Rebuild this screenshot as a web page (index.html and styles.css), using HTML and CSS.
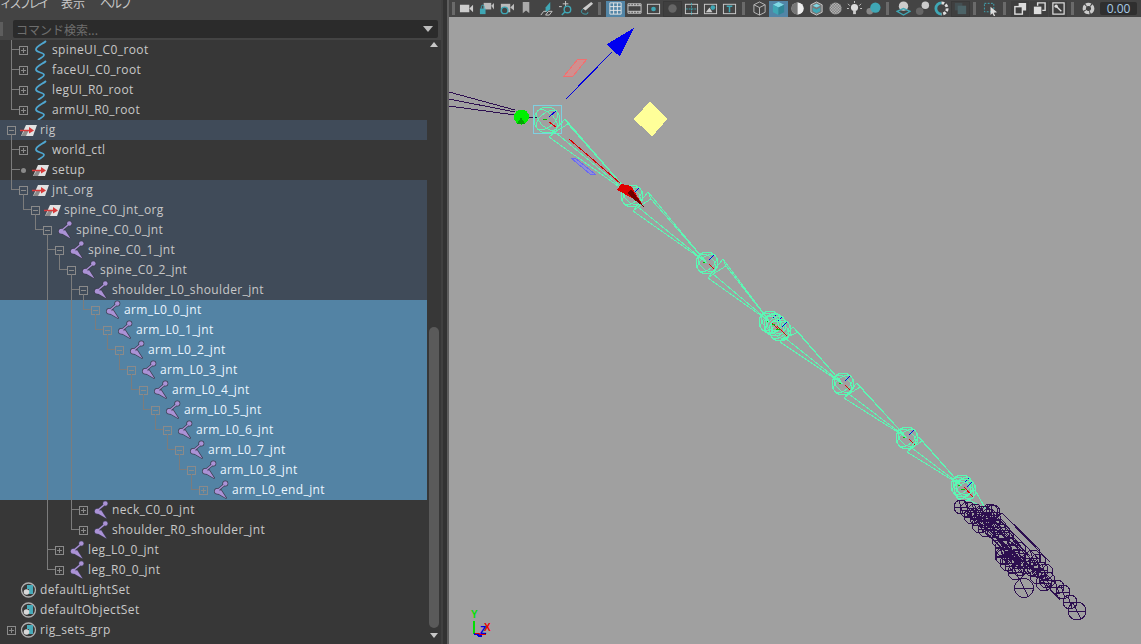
FILE: index.html
```html
<!DOCTYPE html>
<html lang="ja">
<head>
<meta charset="utf-8">
<title>Maya Outliner</title>
<link rel="stylesheet" href="styles.css">
</head>
<body>
<svg class="sprite" aria-hidden="true">
  <defs>
    <symbol id="i-curve" viewBox="0 0 24 20">
      <path d="M18 1C15 4 8 6 8 9.500C8 13 16 12 16 15C16 17 12 18 10 20" fill="none" stroke="#4fa6cf" stroke-width="1.800"/>
    </symbol>
    <symbol id="i-xform" viewBox="0 0 24 20">
      <path d="M10 5H21L17 16H5Z" fill="#e2e2e2"/>
      <path d="M5 16L9 10H13L10 16Z" fill="#8a8a8a"/>
      <path d="M4 10.500H14" stroke="#d83a3a" stroke-width="1.500"/>
      <path d="M13 7L18 10.500L13 13.500Z" fill="#d83a3a"/>
    </symbol>
    <symbol id="i-joint" viewBox="0 0 24 20">
      <g fill="#3d3d50" stroke="#3d3d50" stroke-width="1.400">
        <path d="M9 13L13 10L18.500 18.500Z"/>
        <path d="M10 10L16 5" stroke-width="2.600"/>
        <circle cx="17.300" cy="3.500" r="2.300"/>
        <circle cx="9.300" cy="11.300" r="2.500"/>
      </g>
      <g fill="#ab92d6">
        <path d="M9 13L13 10L18.500 18.500Z"/>
        <path d="M10 10L16 5" stroke="#ab92d6" stroke-width="1.400"/>
        <circle cx="17.300" cy="3.500" r="2.300"/>
        <circle cx="9.300" cy="11.300" r="2.500"/>
      </g>
    </symbol>
    <symbol id="i-set" viewBox="0 0 24 20">
      <circle cx="12.500" cy="10" r="7" fill="none" stroke="#b0b0b0" stroke-width="1.300"/>
      <path d="M11 5H17V14H13V9H11Z" fill="#48aab8"/>
      <circle cx="10.500" cy="12" r="2.800" fill="#d8d8d8"/>
    </symbol>
    <g id="jg">
      <circle r="11"/><ellipse rx="11" ry="6.500" transform="rotate(45)"/><ellipse rx="11" ry="6.500" transform="rotate(-40)"/>
      <path class="ax-b" d="M2-3L7-8"/><path class="ax-r" d="M2 1L8 7"/><path class="ax-g" d="M-4-1L0 0"/>
    </g>
    <g id="pj">
      <circle r="8"/><path d="M-8 0H8M-3-7L3 7"/>
    </g>
    <g id="pk">
      <circle r="7"/><path d="M-7 0H7M-2-6L2 6"/>
    </g>
  </defs>
</svg>

<div class="app">
  <aside class="outliner">
    <div class="menubar">
      <span class="menu kana">ィスプレイ</span><span class="menu kanji">表示</span><span class="menu kana2">ヘルプ</span>
    </div>
    <div class="searchrow">
      <span class="handle"></span>
      <div class="search"><span class="ph">コマンド検索...</span><span class="caret"></span></div>
    </div>
    <div class="treewrap">
      <div class="tree">
        <div class="row" style="--d:1"><span class="exp plus"></span><svg class="ti"><use href="#i-curve"/></svg><span class="lb">spineUI_C0_root</span></div>
        <div class="row" style="--d:1"><span class="exp plus"></span><svg class="ti"><use href="#i-curve"/></svg><span class="lb">faceUI_C0_root</span></div>
        <div class="row" style="--d:1"><span class="exp plus"></span><svg class="ti"><use href="#i-curve"/></svg><span class="lb">legUI_R0_root</span></div>
        <div class="row" style="--d:1"><span class="exp plus"></span><svg class="ti"><use href="#i-curve"/></svg><span class="lb">armUI_R0_root</span></div>
        <div class="row par" style="--d:0"><span class="exp minus"></span><svg class="ti"><use href="#i-xform"/></svg><span class="lb">rig</span></div>
        <div class="row" style="--d:1"><span class="exp plus"></span><svg class="ti"><use href="#i-curve"/></svg><span class="lb">world_ctl</span></div>
        <div class="row" style="--d:1"><span class="exp dot"></span><svg class="ti"><use href="#i-xform"/></svg><span class="lb">setup</span></div>
        <div class="row par" style="--d:1"><span class="exp minus"></span><svg class="ti"><use href="#i-xform"/></svg><span class="lb">jnt_org</span></div>
        <div class="row par" style="--d:2"><span class="exp minus"></span><svg class="ti"><use href="#i-xform"/></svg><span class="lb">spine_C0_jnt_org</span></div>
        <div class="row par" style="--d:3"><span class="exp minus"></span><svg class="ti"><use href="#i-joint"/></svg><span class="lb">spine_C0_0_jnt</span></div>
        <div class="row par" style="--d:4"><span class="exp minus"></span><svg class="ti"><use href="#i-joint"/></svg><span class="lb">spine_C0_1_jnt</span></div>
        <div class="row par" style="--d:5"><span class="exp minus"></span><svg class="ti"><use href="#i-joint"/></svg><span class="lb">spine_C0_2_jnt</span></div>
        <div class="row par" style="--d:6"><span class="exp minus"></span><svg class="ti"><use href="#i-joint"/></svg><span class="lb">shoulder_L0_shoulder_jnt</span></div>
        <div class="row sel" style="--d:7"><span class="exp minus"></span><svg class="ti"><use href="#i-joint"/></svg><span class="lb">arm_L0_0_jnt</span></div>
        <div class="row sel" style="--d:8"><span class="exp minus"></span><svg class="ti"><use href="#i-joint"/></svg><span class="lb">arm_L0_1_jnt</span></div>
        <div class="row sel" style="--d:9"><span class="exp minus"></span><svg class="ti"><use href="#i-joint"/></svg><span class="lb">arm_L0_2_jnt</span></div>
        <div class="row sel" style="--d:10"><span class="exp minus"></span><svg class="ti"><use href="#i-joint"/></svg><span class="lb">arm_L0_3_jnt</span></div>
        <div class="row sel" style="--d:11"><span class="exp minus"></span><svg class="ti"><use href="#i-joint"/></svg><span class="lb">arm_L0_4_jnt</span></div>
        <div class="row sel" style="--d:12"><span class="exp minus"></span><svg class="ti"><use href="#i-joint"/></svg><span class="lb">arm_L0_5_jnt</span></div>
        <div class="row sel" style="--d:13"><span class="exp minus"></span><svg class="ti"><use href="#i-joint"/></svg><span class="lb">arm_L0_6_jnt</span></div>
        <div class="row sel" style="--d:14"><span class="exp minus"></span><svg class="ti"><use href="#i-joint"/></svg><span class="lb">arm_L0_7_jnt</span></div>
        <div class="row sel" style="--d:15"><span class="exp minus"></span><svg class="ti"><use href="#i-joint"/></svg><span class="lb">arm_L0_8_jnt</span></div>
        <div class="row sel" style="--d:16"><span class="exp plus"></span><svg class="ti"><use href="#i-joint"/></svg><span class="lb">arm_L0_end_jnt</span></div>
        <div class="row" style="--d:6"><span class="exp plus"></span><svg class="ti"><use href="#i-joint"/></svg><span class="lb">neck_C0_0_jnt</span></div>
        <div class="row" style="--d:6"><span class="exp plus"></span><svg class="ti"><use href="#i-joint"/></svg><span class="lb">shoulder_R0_shoulder_jnt</span></div>
        <div class="row" style="--d:4"><span class="exp plus"></span><svg class="ti"><use href="#i-joint"/></svg><span class="lb">leg_L0_0_jnt</span></div>
        <div class="row" style="--d:4"><span class="exp plus"></span><svg class="ti"><use href="#i-joint"/></svg><span class="lb">leg_R0_0_jnt</span></div>
        <div class="row" style="--d:0"><span class="exp"></span><svg class="ti"><use href="#i-set"/></svg><span class="lb">defaultLightSet</span></div>
        <div class="row" style="--d:0"><span class="exp"></span><svg class="ti"><use href="#i-set"/></svg><span class="lb">defaultObjectSet</span></div>
        <div class="row" style="--d:0"><span class="exp plus"></span><svg class="ti"><use href="#i-set"/></svg><span class="lb">rig_sets_grp</span></div>
        <svg class="guides" viewBox="0 40 427 604" aria-hidden="true">
          <path d="M11.500 40V109.500H19M11.500 49.500H19M11.500 69.500H19M11.500 89.500H19"/>
          <path d="M11.500 134V189.500H19M11.500 149.500H19M11.500 169.500H20"/>
          <path d="M23.500 194V209.500H31M35.500 214V229.500H43"/>
          <path d="M47.500 234V569.500H55M47.500 249.500H55M47.500 549.500H55"/>
          <path d="M59.500 254V269.500H67"/>
          <path d="M71.500 274V529.500H79M71.500 289.500H79M71.500 509.500H79"/>
          <path d="M83.500 294V309.500H91M95.500 314V329.500H103M107.500 334V349.500H115M119.500 354V369.500H127M131.500 374V389.500H139M143.500 394V409.500H151M155.500 414V429.500H163M167.500 434V449.500H175M179.500 454V469.500H187M191.500 474V489.500H199"/>
        </svg>
      </div>
      <div class="scrollbar">
        <span class="arrow up"></span>
        <div class="track"><div class="thumb"></div></div>
        <span class="arrow down"></span>
      </div>
    </div>
  </aside>
  <div class="strip"></div>
  <main class="view">
    <div class="toolbar">
      <span class="sep first"></span>
      <div class="grp g1">
        <span class="btn"><svg viewBox="0 0 16 16"><rect x="1" y="4" width="10" height="8" fill="#ccc"/><path d="M11 8L15 4V12Z" fill="#ccc"/></svg></span>
        <span class="btn"><svg viewBox="0 0 16 16"><rect x="5" y="2" width="8" height="7" fill="#bbb"/><path d="M13 5L16 2V9Z" fill="#bbb"/><rect x="1" y="8" width="6" height="6" fill="#3fa7b5"/><path d="M2.500 8V6A1.500 1.500 0 0 1 5.500 6V8" fill="none" stroke="#3fa7b5"/></svg></span>
        <span class="btn"><svg viewBox="0 0 16 16"><rect x="2" y="3" width="10" height="9" fill="#bbb"/><path d="M12 7L16 3V10Z" fill="#bbb"/><circle cx="6" cy="10" r="3.500" fill="#444" stroke="#3fa7b5" stroke-width="1.500"/></svg></span>
        <span class="btn"><svg viewBox="0 0 16 16"><path d="M4 1H11V13L7.500 10L4 13Z" fill="#aaa"/></svg></span>
        <span class="btn"><svg viewBox="0 0 16 16"><path d="M7 7L12 1V9L7 12Z" fill="#3fa7b5"/><path d="M2 15L5 11H8M7 15L10 11H14L11 15Z" fill="none" stroke="#ccc"/></svg></span>
        <span class="btn"><svg viewBox="0 0 16 16"><path d="M7 0V6M4 3H10M0 6H3" stroke="#ccc"/><circle cx="9" cy="9" r="3.500" fill="none" stroke="#3fa7b5" stroke-width="1.500"/><path d="M6.500 11.500L3 15" stroke="#3fa7b5" stroke-width="1.500"/></svg></span>
        <span class="btn"><svg viewBox="0 0 16 16"><path d="M13 1L15 3L7 10L4 8Z" fill="#ccc"/><path d="M4 9C1 11 3 14 7 14C10 14 10 12 9 12" fill="none" stroke="#3fa7b5"/></svg></span>
      </div>
      <span class="sep"></span>
      <div class="grp">
        <span class="btn on"><svg viewBox="0 0 16 16"><path d="M2 2H14V14H2ZM2 6H14M2 10H14M6 2V14M10 2V14" fill="none" stroke="#e6e6e6"/></svg></span>
        <span class="btn"><svg viewBox="0 0 16 16"><path d="M1 3H15V13H1ZM1 5H15M1 11H15M4 3V5M7 3V5M10 3V5M13 3V5M4 11V13M7 11V13M10 11V13M13 11V13" fill="none" stroke="#ccc"/></svg></span>
        <span class="btn"><svg viewBox="0 0 16 16"><rect x="1.500" y="3.500" width="13" height="10" fill="none" stroke="#ccc"/><circle cx="8" cy="8.500" r="2.500" fill="#3fa7b5"/></svg></span>
        <span class="btn dark"><svg viewBox="0 0 16 16"><circle cx="8" cy="8" r="4.500" fill="#666"/></svg></span>
        <span class="btn"><svg viewBox="0 0 16 16"><rect x="1.500" y="3.500" width="13" height="10" fill="none" stroke="#ccc"/><path d="M8 2V15M2 8.500H14" stroke="#3fa7b5" stroke-dasharray="2 1"/></svg></span>
        <span class="btn"><svg viewBox="0 0 16 16"><rect x="1.500" y="3.500" width="13" height="10" fill="none" stroke="#ccc"/><path d="M3 12L7 7L10 12Z" fill="#ccc"/><circle cx="10.500" cy="7" r="2.500" fill="#3fa7b5"/></svg></span>
        <span class="btn"><svg viewBox="0 0 16 16"><rect x="1.500" y="3.500" width="13" height="10" fill="none" stroke="#ccc"/><path d="M5 5.500H11M8 5.500V12" stroke="#3fa7b5" stroke-width="1.600"/></svg></span>
      </div>
      <span class="sep"></span>
      <div class="grp">
        <span class="btn"><svg viewBox="0 0 16 16"><path d="M8 1L14 4V12L8 15L2 12V4ZM2 4L8 7L14 4M8 7V15" fill="none" stroke="#bbb"/></svg></span>
        <span class="btn on"><svg viewBox="0 0 16 16"><path d="M8 1L14 4L8 7L2 4Z" fill="#7fd8e4"/><path d="M2 4L8 7V15L2 12Z" fill="#3fa7b5"/><path d="M14 4L8 7V15L14 12Z" fill="#2f8696"/></svg></span>
        <span class="btn"><svg viewBox="0 0 16 16"><circle cx="8" cy="8" r="6.500" fill="#bbb"/><path d="M8 1.500A6.500 6.500 0 0 1 8 14.500Z" fill="#eee"/><path d="M8 1.500A6.500 6.500 0 0 0 8 14.500Z" fill="#777"/></svg></span>
        <span class="btn"><svg viewBox="0 0 16 16"><path d="M8 1L14 4V12L8 15L2 12V4Z" fill="#777" stroke="#ccc"/><path d="M8 3L12 5L8 7L4 5Z" fill="#7fd8e4"/><path d="M4 7L8 9V13L4 11ZM12 7L8 9V13L12 11Z" fill="#3fa7b5"/></svg></span>
        <span class="btn"><svg viewBox="0 0 16 16"><defs><pattern id="chk" width="3" height="3" patternUnits="userSpaceOnUse"><rect width="3" height="3" fill="#ddd"/><rect width="1.500" height="1.500" fill="#555"/><rect x="1.500" y="1.500" width="1.500" height="1.500" fill="#555"/></pattern></defs><circle cx="8" cy="8" r="6.500" fill="url(#chk)"/></svg></span>
        <span class="btn"><svg viewBox="0 0 16 16"><path d="M8 0V2M1 3L3 5M15 3L13 5M0 8H2M14 8H16" stroke="#ccc"/><circle cx="8" cy="7" r="3.800" fill="#ddd"/><rect x="6.500" y="10" width="3" height="4" fill="#ccc"/></svg></span>
        <span class="btn"><svg viewBox="0 0 16 16"><circle cx="4" cy="11" r="3.500" fill="#888"/><circle cx="10" cy="7" r="5.500" fill="#3fa7b5"/></svg></span>
      </div>
      <span class="sep"></span>
      <div class="grp">
        <span class="btn"><svg viewBox="0 0 16 16"><circle cx="8" cy="5.500" r="5" fill="#ccc"/><path d="M1 11L8 8L15 11L8 15Z" fill="none" stroke="#3fa7b5" stroke-width="1.500"/></svg></span>
        <span class="btn"><svg viewBox="0 0 16 16"><circle cx="5" cy="11" r="4" fill="#666"/><circle cx="11" cy="4.500" r="4" fill="#ccc"/></svg></span>
        <span class="btn"><svg viewBox="0 0 16 16"><path d="M8 2A6 6 0 0 0 8 14" fill="none" stroke="#3fa7b5" stroke-width="3"/><path d="M8 2A6 6 0 0 1 8 14" fill="none" stroke="#ddd" stroke-width="3" stroke-dasharray="3 1.500"/></svg></span>
        <span class="btn dark"><svg viewBox="0 0 16 16"><rect x="2" y="2" width="8" height="8" fill="#444f52"/><rect x="5" y="5" width="9" height="9" fill="#4c6367"/></svg></span>
      </div>
      <span class="sep"></span>
      <div class="grp">
        <span class="btn"><svg viewBox="0 0 16 16"><path d="M1.500 2.500H11.500V11.500H1.500Z" fill="none" stroke="#3fa7b5" stroke-dasharray="2 1.500"/><path d="M8 6L15 12L11.500 12.500L13 16L11.500 16L10 13L8 15Z" fill="#ddd"/></svg></span>
      </div>
      <span class="sep"></span>
      <div class="grp">
        <span class="btn shade"><svg viewBox="0 0 16 16"><rect x="2" y="6" width="8" height="8" fill="none" stroke="#ddd" stroke-width="1.500"/><path d="M6 6V2H14V10H10V6Z" fill="#ddd"/></svg></span>
        <span class="btn shade"><svg viewBox="0 0 16 16"><rect x="2" y="6" width="8" height="8" fill="#ddd"/><path d="M6 5V2H14V10H11" fill="none" stroke="#ddd" stroke-width="1.500"/></svg></span>
        <span class="btn shade"><svg viewBox="0 0 16 16"><rect x="2" y="2" width="12" height="12" fill="none" stroke="#ddd" stroke-width="1.300"/><path d="M5 5L11 11" stroke="#ddd" stroke-width="1.500"/><circle cx="5.500" cy="5.500" r="1.800" fill="#ddd"/></svg></span>
      </div>
      <span class="sep"></span>
      <div class="grp">
        <span class="btn"><svg viewBox="0 0 16 16"><circle cx="8" cy="8" r="4.500" fill="none" stroke="#ccc" stroke-width="3.500" stroke-dasharray="5 1"/></svg></span>
      </div>
      <span class="field">0.00</span>
    </div>
    <div class="canvas">
      <svg class="scene" viewBox="449 17 692 627" aria-label="3D viewport">
        <g class="pur">
          <path d="M449 92L515 110M449 99L515 112M449 106L515 115M528 117L538 118"/>
        </g>
        <circle cx="521.500" cy="117" r="7.500" fill="#00f000"/>
        <path d="M521 117L517 124H525Z" fill="#00a800"/>
        <path d="M564 76L578 59H587L573 76Z" fill="#cf9090" stroke="#f07070"/>
        <path d="M571 158H575L595 174H590Z" fill="#8f8fd8" stroke="#6a6af0"/>
        <path d="M650 103L666 119L652 135L635 119Z" fill="#ffff99" stroke="#ffff99" stroke-width="2" stroke-linejoin="round"/>
        <path d="M566 99L612 52" stroke="#0000e0" fill="none"/>
        <path d="M634 28L620 56L613 51L607 44Z" fill="#0000f0"/>
        <rect x="533.500" y="105.500" width="28" height="28" fill="none" stroke="#7fd0e0"/>
        <g class="grn">
          <circle cx="547" cy="120" r="13"/><ellipse cx="547" cy="120" rx="13" ry="7" transform="rotate(45 547 120)"/><ellipse cx="547" cy="120" rx="13" ry="7" transform="rotate(-40 547 120)"/>
          <path class="ax-b" d="M549 117L556 111"/><path class="ax-r" d="M549 122L556 127"/><path class="ax-g" d="M543 119L547 120"/>
          <use href="#jg" x="632" y="196"/>
          <use href="#jg" x="707" y="263"/>
          <use href="#jg" x="770" y="322"/>
          <use href="#jg" x="775" y="325"/>
          <use href="#jg" x="780" y="330"/>
          <use href="#jg" x="843" y="384"/>
          <use href="#jg" x="907" y="438"/>
          <use href="#jg" x="962" y="486"/>
          <use href="#jg" x="965" y="490"/>
          <path d="M565 119L549 137L555 132L568 124ZM565 119L632 196M549 137L632 196M555 132L632 196M568 124L632 196"/>
          <path d="M648 192L633 211L638 207L651 199ZM648 192L707 263M633 211L707 263M638 207L707 263M651 199L707 263"/>
          <path d="M723 259L708 278L713 274L726 266ZM723 259L770 322M708 278L770 322M713 274L770 322M726 266L770 322"/>
          <path d="M793 327L780 342L785 338L798 332ZM793 327L843 384M780 342L843 384M785 338L843 384M798 332L843 384"/>
          <path d="M857 383L844 398L849 394L860 387ZM857 383L907 438M844 398L907 438M849 394L907 438M860 387L907 438"/>
          <path d="M919 437L907 452L912 448L922 441ZM919 437L962 486M907 452L962 486M912 448L962 486M922 441L962 486"/>
          <path d="M975 490L963 497L985 508ZM975 490L985 508"/>
        </g>
        <path class="redline" d="M569 139L620 183"/>
        <path d="M617 190L621 184L631 186L644 207L632 198Z" fill="#e00000"/>
        <path d="M632 198L644 207L631 189L627 193Z" fill="#700000"/>
        <g class="pur">
          <circle cx="1077" cy="611" r="9"/><path d="M1068 611H1086M1073 603L1081 619"/>
          <circle cx="1024" cy="588" r="9.500"/><path d="M1015 588H1033M1020 580L1028 596"/>
          <use href="#pk" x="961" y="507"/><use href="#pj" x="968" y="510"/><use href="#pj" x="975" y="512"/>
          <use href="#pj" x="982" y="514"/><use href="#pj" x="990" y="512"/><use href="#pk" x="993" y="512"/>
          <use href="#pj" x="978" y="518"/><use href="#pj" x="986" y="520"/><use href="#pj" x="992" y="523"/>
          <use href="#pj" x="972" y="516"/><use href="#pj" x="984" y="514"/><use href="#pj" x="989" y="517"/><use href="#pj" x="993" y="520"/>
          <use href="#pj" x="980" y="525"/><use href="#pj" x="986" y="529"/><use href="#pj" x="993" y="530"/>
          <use href="#pj" x="998" y="527"/><use href="#pj" x="1002" y="532"/><use href="#pj" x="1000" y="540"/>
          <use href="#pj" x="1006" y="538"/><use href="#pj" x="1010" y="545"/><use href="#pj" x="1003" y="548"/>
          <use href="#pj" x="1004" y="557"/><use href="#pj" x="1012" y="552"/><use href="#pj" x="1018" y="550"/>
          <use href="#pj" x="1010" y="559"/><use href="#pj" x="1017" y="557"/><use href="#pj" x="1022" y="561"/>
          <use href="#pj" x="1013" y="566"/><use href="#pj" x="1020" y="568"/><use href="#pj" x="1026" y="566"/>
          <use href="#pj" x="1003" y="556"/><use href="#pj" x="1008" y="563"/><use href="#pj" x="1016" y="572"/>
          <use href="#pj" x="1033" y="558"/><use href="#pj" x="1038" y="562"/><use href="#pj" x="1032" y="568"/>
          <use href="#pj" x="1040" y="570"/><use href="#pj" x="1045" y="572"/><use href="#pj" x="1038" y="576"/>
          <use href="#pj" x="1044" y="583"/><use href="#pj" x="1047" y="580"/>
          <use href="#pk" x="1057" y="587"/><use href="#pk" x="1063" y="592"/><use href="#pk" x="1070" y="602"/>
          <path d="M1002 513L1040 550L1038 575L985 526ZM1002 513L1050 562M985 526L1030 570M975 515L1010 540M965 512L1022 560M1020 555L1060 600M970 508L1018 548M980 508L1030 556M992 512L1040 560M975 522L1020 566M988 535L1026 572M1000 520L1036 566"/>
        </g>
        <g class="tri">
          <path class="y" d="M474 621V634"/>
          <path class="x" d="M474 634H486"/>
          <path class="z" d="M474 634L482 636M482 636H478"/>
          <text class="ty" x="471" y="618">Y</text>
          <text class="tx" x="484" y="631">X</text>
          <text class="tz" x="480" y="634">Z</text>
        </g>
      </svg>
    </div>
  </main>
</div>
</body>
</html>
```

FILE: styles.css
```css
html, body {
  margin: 0;
  padding: 0;
  height: 100%;
  overflow: hidden;
  background: #373737;
}

.sprite {
  position: absolute;
  width: 0;
  height: 0;
}

.app {
  display: flex;
  width: 1141px;
  height: 644px;
  font-family: "Open Sans", "Noto Sans CJK JP", sans-serif;
}

.outliner {
  display: flex;
  flex-direction: column;
  width: 441px;
  height: 644px;
  flex: none;
  background: #373737;
}

.menubar {
  display: flex;
  height: 18px;
  overflow: hidden;
  background: #444444;
  font-family: "Noto Sans CJK JP", sans-serif;
  font-size: 12px;
  line-height: 16px;
  color: #c8c8c8;
}

.menu {
  margin-top: -5px;
}

.kana {
  width: 61px;
  letter-spacing: -2.500px;
}

.kanji {
  width: 39px;
}

.kana2 {
  letter-spacing: -2px;
}

.searchrow {
  display: flex;
  align-items: center;
  height: 22px;
  background: #444444;
}

.handle {
  width: 6px;
  height: 14px;
  margin: 0 7px 0 0;
  border-left: 3px solid #5d5d5d;
  box-sizing: border-box;
}

.search {
  display: flex;
  align-items: center;
  justify-content: space-between;
  width: 425px;
  height: 18px;
  background: #2b2b2b;
  border-radius: 2px;
  padding: 0 3px;
  box-sizing: border-box;
}

.ph {
  font-family: "Noto Sans CJK JP", sans-serif;
  font-size: 12px;
  color: #6e6e6e;
}

.caret {
  width: 0;
  height: 0;
  margin-right: 2px;
  border-left: 5px solid transparent;
  border-right: 5px solid transparent;
  border-top: 6px solid #bdbdbd;
}

.treewrap {
  display: flex;
  flex: 1;
  min-height: 0;
}

.tree {
  position: relative;
  width: 427px;
  flex: none;
  overflow: hidden;
}

.row {
  display: flex;
  align-items: center;
  height: 20px;
  padding-left: calc(var(--d) * 12px + 7px);
  font-size: 12px;
  letter-spacing: 0.380px;
  color: #c8c8c8;
  white-space: nowrap;
}

.lb {
  margin-top: -2px;
}

.par {
  background: #404b59;
}

.sel {
  background: #5383a4;
  color: #ecf6ff;
}

.exp {
  position: relative;
  width: 9px;
  height: 9px;
  flex: none;
  box-sizing: border-box;
}

.plus, .minus {
  border: 1px solid #8a8a8a;
}

.plus::before, .minus::before {
  content: "";
  position: absolute;
  left: 1px;
  top: 3px;
  width: 5px;
  height: 1px;
  background: #8a8a8a;
}

.plus::after {
  content: "";
  position: absolute;
  left: 3px;
  top: 1px;
  width: 1px;
  height: 5px;
  background: #8a8a8a;
}

.dot::before {
  content: "";
  position: absolute;
  left: 2px;
  top: 2px;
  width: 5px;
  height: 5px;
  border-radius: 50%;
  background: #8a8a8a;
}

.ti {
  width: 24px;
  height: 20px;
  flex: none;
}

.guides {
  position: absolute;
  left: 0;
  top: 0;
  width: 427px;
  height: 604px;
  fill: none;
  stroke: #7c7c7c;
  stroke-width: 1;
  shape-rendering: crispEdges;
  pointer-events: none;
}

.scrollbar {
  display: flex;
  flex-direction: column;
  align-items: center;
  width: 14px;
  flex: none;
  background: #373737;
}

.track {
  flex: 1;
  display: flex;
  flex-direction: column;
  justify-content: flex-end;
  width: 10px;
  min-height: 0;
}

.thumb {
  height: 301px;
  background: #5a5a5a;
  border-radius: 5px;
}

.arrow {
  width: 0;
  height: 0;
  border-left: 4px solid transparent;
  border-right: 4px solid transparent;
}

.arrow.up {
  margin: 2px 0;
  border-bottom: 5px solid #c8c8c8;
}

.arrow.down {
  margin: 5px 0 6px;
  border-top: 5px solid #c8c8c8;
}

.strip {
  width: 8px;
  flex: none;
  background: linear-gradient(to right, #404040 0 2px, #333333 2px 6px, #5e5e5e 6px 8px);
}

.view {
  display: flex;
  flex-direction: column;
  flex: 1;
  min-width: 0;
}

.toolbar {
  display: flex;
  align-items: center;
  height: 17px;
  flex: none;
  background: #444444;
}

.grp {
  display: flex;
}

.g1 {
  margin-right: -1px;
}

.g1 .btn {
  width: 20px;
}

.btn {
  display: flex;
  align-items: center;
  justify-content: center;
  width: 19px;
  height: 16px;
  box-sizing: border-box;
}

.btn svg {
  width: 15px;
  height: 15px;
}

.on {
  background: #5285a6;
}

.dark {
  background: #3f3f3f;
  box-shadow: inset 0 0 0 1px #393939;
}

.shade {
  background: #3e3e3e;
  margin-right: 1px;
  width: 18px;
}

.sep {
  width: 3px;
  height: 13px;
  margin: 0 5px 0 3px;
  background: #6a6a6a;
  flex: none;
}

.sep.first {
  margin: 0 1px 0 3px;
}

.field {
  width: 37px;
  height: 13px;
  margin-left: 2px;
  background: #2f2f2f;
  border-radius: 2px;
  color: #a8cbe6;
  font-size: 12px;
  line-height: 13px;
  text-align: center;
}

.canvas {
  flex: 1;
  min-height: 0;
  background: #a0a0a0;
}

.scene {
  display: block;
  width: 692px;
  height: 627px;
  shape-rendering: crispEdges;
}

.pur {
  fill: none;
  stroke: #2d0f50;
  stroke-width: 1;
}

.grn {
  fill: none;
  stroke: #5cf7b4;
  stroke-width: 1;
}

.ax-b {
  stroke: #0000e0;
}

.ax-r {
  stroke: #e00000;
}

.ax-g {
  stroke: #00c000;
}

.redline {
  stroke: #d80000;
  fill: none;
}

.tri path {
  fill: none;
  stroke-width: 1.500;
}

.tri .y {
  stroke: #00e000;
}

.tri .x {
  stroke: #e00000;
}

.tri .z {
  stroke: #0000e0;
}

.tri text {
  font-family: "Liberation Sans", sans-serif;
  font-size: 10px;
  font-weight: 700;
}

.ty {
  fill: #00e000;
}

.tx {
  fill: #f00000;
}

.tz {
  fill: #0000e0;
}
```
